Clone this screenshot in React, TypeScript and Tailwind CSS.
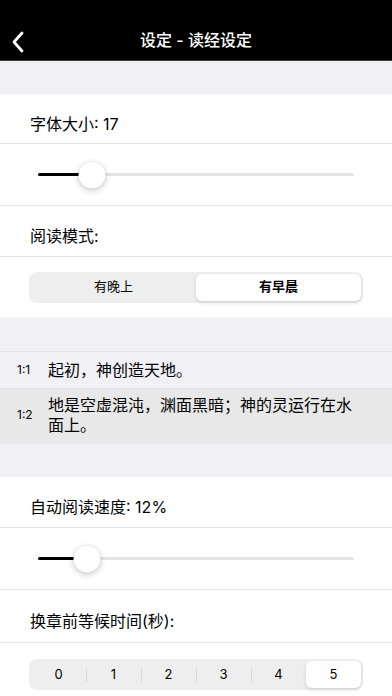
import React, { useState } from 'react';
import clsx from 'clsx';

const font = { fontFamily: '"Inter", "Noto Sans CJK SC", "Noto Sans", sans-serif' };

const Slider: React.FC<{ value: number }> = ({ value }) => {
    // value in px along the track
    return (
        <div className="relative h-[61px] flex items-center px-[38px]">
            <div className="relative w-full h-[3px] rounded-full bg-[#e5e5e5]">
                <div className="absolute left-0 top-0 h-[3px] rounded-full bg-black" style={{ width: value }} />
                <div
                    className="absolute top-1/2 w-[27px] h-[27px] -translate-y-1/2 -translate-x-1/2 rounded-full bg-white shadow-[0_2px_6px_rgba(0,0,0,0.22),0_0_1px_rgba(0,0,0,0.15)]"
                    style={{ left: value }}
                />
            </div>
        </div>
    );
};

const Segmented: React.FC<{ items: string[]; active: number; bold?: boolean }> = ({ items, active, bold }) => (
    <div className="flex h-[31px] mx-[29px] rounded-[8px] bg-[#eeeeef] p-[2px]">
        {items.map((item, i) => (
            <div key={item} className="relative flex-1 flex items-center justify-center">
                {i > 0 && i !== active && i - 1 !== active && (
                    <div className="absolute left-0 top-[7px] h-[14px] w-px bg-[#d8d8dc]" />
                )}
                <div
                    className={clsx(
                        'w-full h-full flex items-center justify-center rounded-[6px] text-[13px] text-black',
                        i === active && 'bg-white shadow-[0_2px_4px_rgba(0,0,0,0.12)]',
                        i === active && bold && 'font-semibold'
                    )}
                >
                    {item}
                </div>
            </div>
        ))}
    </div>
);

const LabelRow: React.FC<{ text: string; h: number }> = ({ text, h }) => (
    <div
        className="flex items-center pl-[30px] pt-[10px] border-b border-[#e6e6e6] text-[16px] text-black"
        style={{ height: h }}
    >
        {text}
    </div>
);

export default function App() {
    const [mode] = useState(1);
    return (
        <div className="w-[392px] h-[696px] overflow-hidden bg-[#f1f1f5]" style={font}>
            {/* Header */}
            <div className="relative h-[61px] bg-black flex items-center justify-center pt-[20px] border-b border-[#3a3a3a]">
                <svg className="absolute left-[10px] top-[30px]" width="16" height="24" viewBox="0 0 16 24" fill="none">
                    <path d="M12 3 L4 12 L12 21" stroke="white" strokeWidth="2.8" strokeLinecap="round" strokeLinejoin="round" />
                </svg>
                <span className="text-white text-[16px] font-medium">设定 - 读经设定</span>
            </div>

            <div className="h-[33px]" />

            {/* Font size */}
            <div className="bg-white">
                <LabelRow text="字体大小: 17" h={50} />
                <div className="border-b border-[#e6e6e6]">
                    <Slider value={54} />
                </div>
                <LabelRow text="阅读模式:" h={51} />
                <div className="h-[60px] flex flex-col justify-center">
                    <Segmented items={['有晚上', '有早晨']} active={mode} bold />
                </div>
            </div>

            <div className="h-[34px]" />

            {/* Preview */}
            <div className="border-t border-[#e3e3e6]">
                <div className="flex items-center h-[37px] border-b border-[#e3e3e6]">
                    <span className="w-[48px] pl-[17px] text-[12px] text-black">1:1</span>
                    <span className="text-[16px] text-black">起初，神创造天地。</span>
                </div>
                <div className="flex items-center h-[55px] pb-[4px] bg-[#e8e8e9]">
                    <span className="w-[48px] pl-[17px] text-[12px] text-black shrink-0">1:2</span>
                    <span className="text-[16px] leading-[20px] text-black pr-[30px]">
                        地是空虚混沌，渊面黑暗；神的灵运行在水面上。
                    </span>
                </div>
            </div>

            <div className="h-[33px]" />

            {/* Auto read */}
            <div className="bg-white">
                <LabelRow text="自动阅读速度: 12%" h={51} />
                <div className="border-b border-[#e6e6e6]">
                    <Slider value={49} />
                </div>
                <LabelRow text="换章前等候时间(秒):" h={53} />
                <div className="pt-[16px] pb-[10px]">
                    <Segmented items={['0', '1', '2', '3', '4', '5']} active={5} />
                </div>
            </div>
        </div>
    );
}
